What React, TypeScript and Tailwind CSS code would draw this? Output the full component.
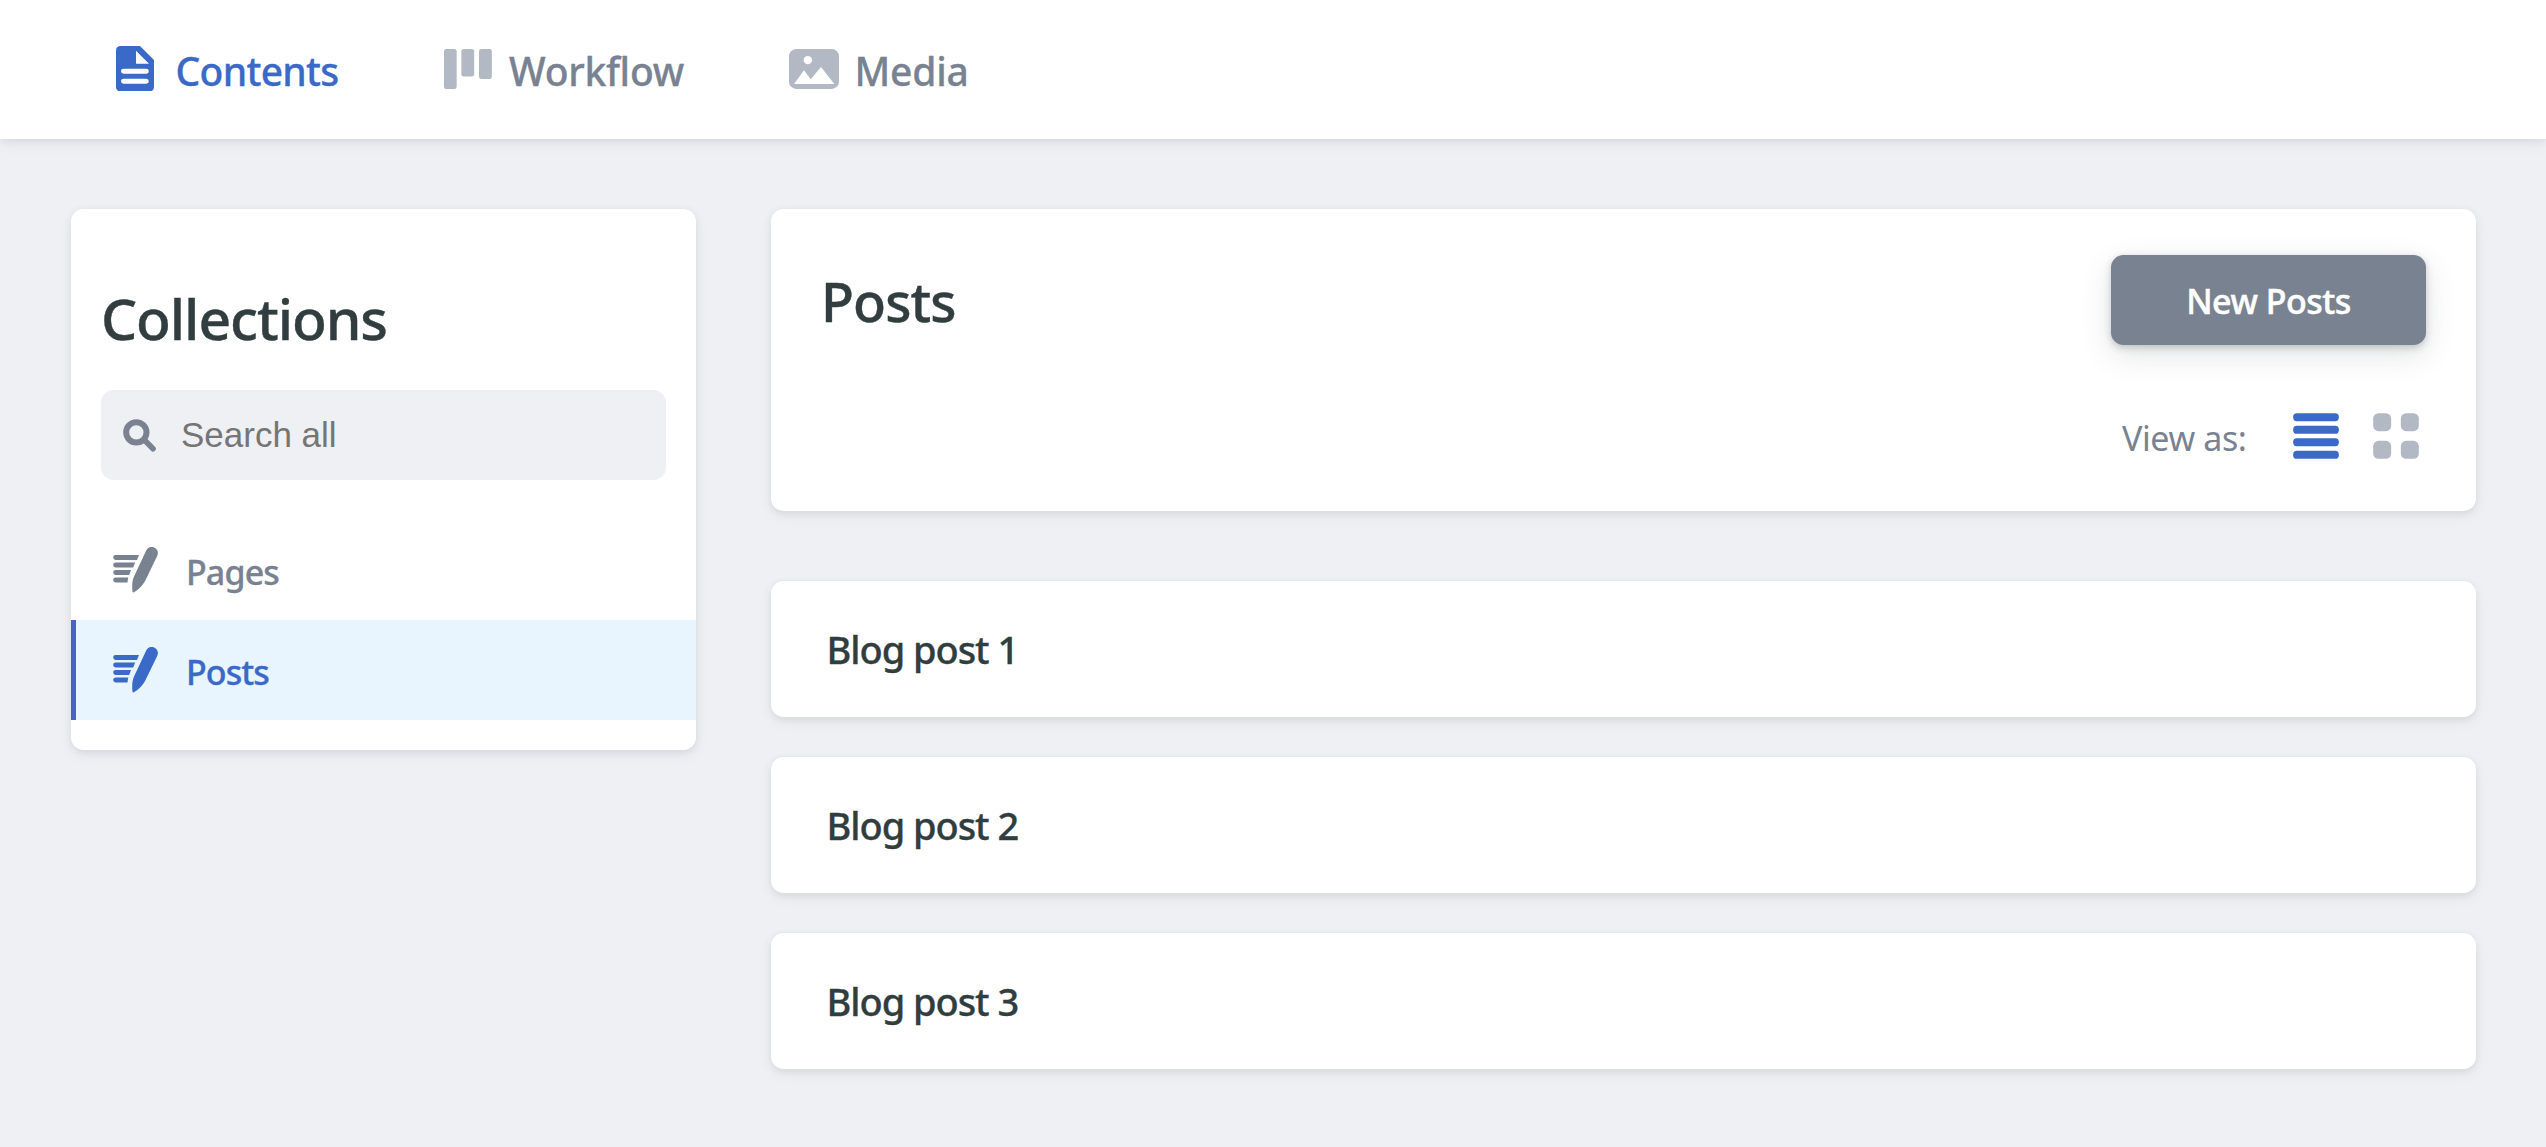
import React from 'react';

const cardShadow =
  'shadow-[0_5px_15px_0_rgba(68,74,87,0.05),0_2.5px_7.5px_0_rgba(68,74,87,0.1)]';

function ContentsIcon() {
  return (
    <svg viewBox="168 139 114 136" className="block h-[45.3px] w-[38px] shrink-0" fill="currentColor">
      <path
        fillRule="evenodd"
        d="M182 139H240L282 181V261Q282 275 268 275H182Q168 275 168 261V153Q168 139 182 139ZM228 153V192H267ZM190.500 207A7.500 7.500 0 0 0 190.500 222H259A7.500 7.500 0 0 0 259 207ZM190.500 237A7.500 7.500 0 0 0 190.500 252H259A7.500 7.500 0 0 0 259 237Z"
      />
    </svg>
  );
}

function WorkflowIcon() {
  return (
    <svg viewBox="0 0 144 120" className="block h-10 w-12 shrink-0" fill="currentColor">
      <rect x="0" y="0" width="38" height="120" rx="7" />
      <rect x="52" y="0" width="38.500" height="82.500" rx="7" />
      <rect x="105" y="0" width="38.500" height="90" rx="7" />
    </svg>
  );
}

function MediaIcon() {
  return (
    <svg viewBox="687 147 150 120" className="block h-10 w-[50px] shrink-0" fill="currentColor">
      <rect x="687" y="147" width="150" height="120" rx="22" />
      <circle cx="743.500" cy="180.500" r="12.500" className="fill-white" />
      <path d="M702 252L732 211L752 238L783 201L823 252Z" className="fill-white" />
    </svg>
  );
}

function SearchIcon() {
  return (
    <svg viewBox="219 719 99 99" className="block size-[33px] shrink-0" fill="none" stroke="currentColor">
      <circle cx="259" cy="759" r="30.500" strokeWidth="18" />
      <path d="M284 783L309 808" strokeWidth="17" strokeLinecap="round" />
    </svg>
  );
}

function WriteIcon() {
  return (
    <svg viewBox="189 141 135 137" className="block h-[45.600px] w-[45px] shrink-0" fill="currentColor">
      <path d="M197 165H267L261 180H197A7.500 7.500 0 0 1 197 165Z" />
      <path d="M197 187.500H255.500L249.500 202.500H197A7.500 7.500 0 0 1 197 187.500Z" />
      <path d="M197 210H243L237.500 225H197A7.500 7.500 0 0 1 197 210Z" />
      <path d="M197 232.500H234.500L232.500 247.500H197A7.500 7.500 0 0 1 197 232.500Z" />
      <path d="M289 151C294 141 305 138.500 314 143C323 147.500 326 157 322 167L286 242C280 254 268 268 252 277C249 278.500 247.500 277 247.300 274C245.500 255 247 242 252 230Z" />
    </svg>
  );
}

function ListIcon() {
  return (
    <svg viewBox="0 0 138 138" className="block size-[46px] shrink-0" fill="currentColor">
      {[0, 38, 75, 113].map((y) => (
        <rect key={y} x="0.500" y={y + 0.5} width="137" height="24" rx="11" />
      ))}
    </svg>
  );
}

function GridIcon() {
  return (
    <svg viewBox="0 0 138 138" className="block size-[46px] shrink-0" fill="currentColor">
      <rect x="0.500" y="0.500" width="54" height="54" rx="16" />
      <rect x="83.500" y="0.500" width="54" height="54" rx="16" />
      <rect x="0.500" y="83.500" width="54" height="54" rx="16" />
      <rect x="83.500" y="83.500" width="54" height="54" rx="16" />
    </svg>
  );
}

function Header() {
  return (
    <header
      className="flex h-[139px] items-center bg-white pl-[116px] text-[39px] leading-10 font-medium text-[#798291] [-webkit-text-stroke:0.3px] shadow-[0_5px_15px_0_rgba(68,74,87,0.05),0_2.5px_7.5px_0_rgba(68,74,87,0.1)]"
    >
      <a className="flex w-[328px] items-center text-[#3a69c7]">
        <span className="pb-[2px]">
          <ContentsIcon />
        </span>
        <span className="ml-[21.500px] pt-[3px] tracking-[-0.7px]">Contents</span>
      </a>
      <a className="flex w-[345px] items-center">
        <span className="pb-px text-[#b3b9c4]">
          <WorkflowIcon />
        </span>
        <span className="ml-[17px] pt-[3px] tracking-[-0.27px]">Workflow</span>
      </a>
      <a className="flex items-center">
        <span className="pb-px text-[#b3b9c4]">
          <MediaIcon />
        </span>
        <span className="ml-[15.500px] pt-[3px] tracking-[-0.2px]">Media</span>
      </a>
    </header>
  );
}

function Sidebar() {
  return (
    <aside className={`w-[625px] shrink-0 rounded-[12.5px] bg-white pt-[79px] pb-[30px] ${cardShadow}`}>
      <h2 className="ml-[30px] pt-px text-[57px] leading-[59px] font-medium tracking-[-1.1px] text-[#313d3e] [-webkit-text-stroke:0.4px]">
        Collections
      </h2>
      <div className="mx-[30px] mt-[42px] flex h-[90px] items-center rounded-[12.5px] bg-[#eff0f4] pl-[22px] text-[#7a8291]">
        <SearchIcon />
        <input
          className="ml-[25px] w-96 bg-transparent font-['Liberation_Sans',Arial,sans-serif] text-[35px] leading-10 outline-none placeholder:text-[#757575]"
          placeholder="Search all"
        />
      </div>
      <nav className="mt-10 text-[34px] leading-10 font-medium [-webkit-text-stroke:0.3px]">
        <a className="flex h-[100px] items-center border-l-[5px] border-transparent pl-[37px] text-[#798291]">
          <WriteIcon />
          <span className="ml-[28px] pt-[3px] tracking-[-0.87px]">Pages</span>
        </a>
        <a className="flex h-[100px] items-center border-l-[5px] border-[#4863c6] bg-[#e8f5fe] pl-[37px] text-[#3a69c7]">
          <WriteIcon />
          <span className="ml-[28px] pt-[3px] tracking-[-0.93px]">Posts</span>
        </a>
      </nav>
    </aside>
  );
}

function CollectionTop() {
  return (
    <section className={`h-[302px] rounded-[12.5px] bg-white pt-[46px] pr-[50px] pl-[50px] ${cardShadow}`}>
      <div className="flex h-[90px] items-center justify-between">
        <h1 className="pt-0.5 text-[54px] leading-[60px] font-medium tracking-[-0.88px] text-[#313d3e] [-webkit-text-stroke:0.4px]">
          Posts
        </h1>
        <button className="flex h-[90px] w-[315px] items-center justify-center rounded-[12.5px] bg-[#798291] pt-0.5 text-[34px] leading-10 font-medium tracking-[-0.5px] text-white [-webkit-text-stroke:0.5px] shadow-[0_10px_30px_0_rgba(68,74,87,0.15),0_2.5px_7.5px_0_rgba(68,74,87,0.25)]">
          New Posts
        </button>
      </div>
      <div className="mt-[68px] flex h-[46px] items-center justify-end pr-[7px]">
        <span className="mr-[46.500px] pt-1 text-[34px] leading-10 tracking-[-0.4px] text-[#798291]">View as:</span>
        <span className="text-[#3a69c7]">
          <ListIcon />
        </span>
        <span className="ml-[34px] text-[#b3b9c4]">
          <GridIcon />
        </span>
      </div>
    </section>
  );
}

const posts = ['Blog post 1', 'Blog post 2', 'Blog post 3'];

export default function App() {
  return (
    <div className="min-h-[1147px] bg-[#eff0f4] font-['Noto_Sans','Open_Sans',sans-serif]">
      <Header />
      <div className="flex items-start gap-[75px] pt-[70px] pr-[70px] pl-[71px]">
        <Sidebar />
        <main className="flex-1">
          <CollectionTop />
          <ul className="mt-[70px] flex flex-col gap-10">
            {posts.map((title) => (
              <li
                key={title}
                className={`flex h-[136px] items-center rounded-[12.5px] bg-white pb-px pl-[55.500px] text-[38px] leading-10 font-medium tracking-[-1.05px] text-[#313d3e] [-webkit-text-stroke:0.3px] ${cardShadow}`}
              >
                {title}
              </li>
            ))}
          </ul>
        </main>
      </div>
    </div>
  );
}
